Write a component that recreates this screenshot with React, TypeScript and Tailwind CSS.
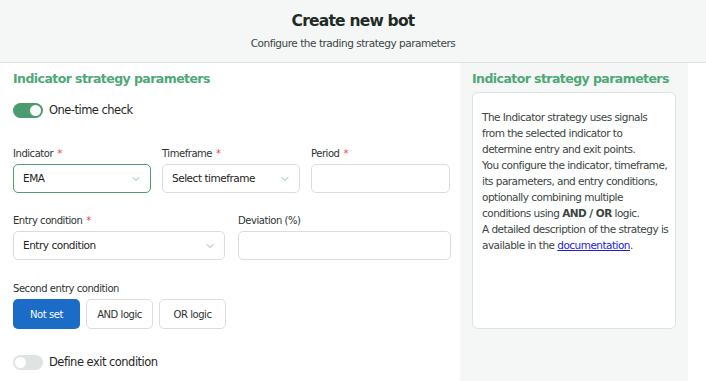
import { ChevronDown } from 'lucide-react';

const font = { fontFamily: '"DejaVu Sans", Verdana, sans-serif' };

function Label({ text, required }: { text: string; required?: boolean }) {
  return (
    <div className="text-[10px] tracking-[-0.045em] text-[#2b3431] mb-[4px] leading-[12px]">
      {text}
      {required && <span className="text-[#e5484d] ml-1">*</span>}
    </div>
  );
}

function Select({ value, active }: { value: string; active?: boolean }) {
  return (
    <div
      className={`h-[29px] rounded-[5px] border flex items-center justify-between pl-[9px] pr-[8px] text-[10.5px] tracking-[-0.045em] text-[#1d2422] bg-white ${
        active ? 'border-[#4d9e72]' : 'border-[#d9dedc]'
      }`}
    >
      <span>{value}</span>
      <ChevronDown size={12} strokeWidth={1.3} className="text-[#4d9e72]" />
    </div>
  );
}

function Toggle({ on }: { on?: boolean }) {
  return (
    <div
      className={`w-[30px] h-[15px] rounded-full p-[2px] flex ${
        on ? 'bg-[#4a9b6d] justify-end' : 'bg-[#dfe3e1] justify-start'
      }`}
    >
      <div className="w-[11px] h-[11px] rounded-full bg-white" />
    </div>
  );
}

export default function App() {
  return (
    <div className="w-[706px] h-[381px] bg-white overflow-hidden" style={font}>
      {/* header */}
      <div className="h-[63px] bg-[#f5f7f6] border-b border-[#dde3e1] flex flex-col items-center pt-[11px]">
        <h1 className="text-[15.5px] tracking-[-0.05em] font-bold text-[#1f2b25] leading-[20px]">Create new bot</h1>
        <p className="text-[10.5px] tracking-[-0.045em] text-[#3b4642] mt-[5px] leading-[14px]">
          Configure the trading strategy parameters
        </p>
      </div>

      <div className="flex">
        {/* form */}
        <div className="w-[460px] pl-[13px] pr-[9px] pt-[8px]">
          <h2 className="text-[12.5px] tracking-[-0.045em] font-bold text-[#4fa877] leading-[16px]">
            Indicator strategy parameters
          </h2>

          <div className="flex items-center gap-[6px] mt-[15px]">
            <Toggle on />
            <span className="text-[11.5px] tracking-[-0.045em] text-[#1f2724]">One-time check</span>
          </div>

          <div className="grid grid-cols-[138px_138px_139px] gap-x-[11px] mt-[29px]">
            <div>
              <Label text="Indicator" required />
              <Select value="EMA" active />
            </div>
            <div>
              <Label text="Timeframe" required />
              <Select value="Select timeframe" />
            </div>
            <div>
              <Label text="Period" required />
              <div className="h-[29px] rounded-[5px] border border-[#d9dedc] bg-white" />
            </div>
          </div>

          <div className="grid grid-cols-[212px_213px] gap-x-[13px] mt-[22px]">
            <div>
              <Label text="Entry condition" required />
              <Select value="Entry condition" />
            </div>
            <div>
              <Label text="Deviation (%)" />
              <div className="h-[29px] mt-[1px] rounded-[5px] border border-[#d9dedc] bg-white" />
            </div>
          </div>

          <div className="mt-[23px]">
            <Label text="Second entry condition" />
            <div className="flex gap-[6px] text-[10px] tracking-[-0.045em]">
              <button className="w-[67px] h-[30px] rounded-[5px] bg-[#1b6cc6] text-white">Not set</button>
              <button className="w-[67px] h-[30px] rounded-[5px] border border-[#d9dedc] text-[#2b3431]">AND logic</button>
              <button className="w-[67px] h-[30px] rounded-[5px] border border-[#d9dedc] text-[#2b3431]">OR logic</button>
            </div>
          </div>

          <div className="flex items-center gap-[6px] mt-[25px]">
            <Toggle />
            <span className="text-[11.5px] tracking-[-0.045em] text-[#1f2724]">Define exit condition</span>
          </div>
        </div>

        {/* side panel */}
        <div className="w-[228px] h-[318px] bg-[#f5f7f6] px-[12px] pt-[8px]">
          <h2 className="text-[12.5px] tracking-[-0.045em] font-bold text-[#4fa877] leading-[16px]">
            Indicator strategy parameters
          </h2>
          <div className="mt-[5px] h-[237px] bg-white border border-[#dde3e1] rounded-[6px] pl-[9px] pt-[16px] text-[10.5px] tracking-[-0.05em] leading-[16px] text-[#3a4541] whitespace-nowrap overflow-hidden">
            The Indicator strategy uses signals
            <br />
            from the selected indicator to
            <br />
            determine entry and exit points.
            <br />
            You configure the indicator, timeframe,
            <br />
            its parameters, and entry conditions,
            <br />
            optionally combining multiple
            <br />
            conditions using <b>AND / OR</b> logic.
            <br />
            A detailed description of the strategy is
            <br />
            available in the <a href="#" className="text-[#1c1ce0] underline">documentation</a>.
          </div>
        </div>
      </div>
    </div>
  );
}
